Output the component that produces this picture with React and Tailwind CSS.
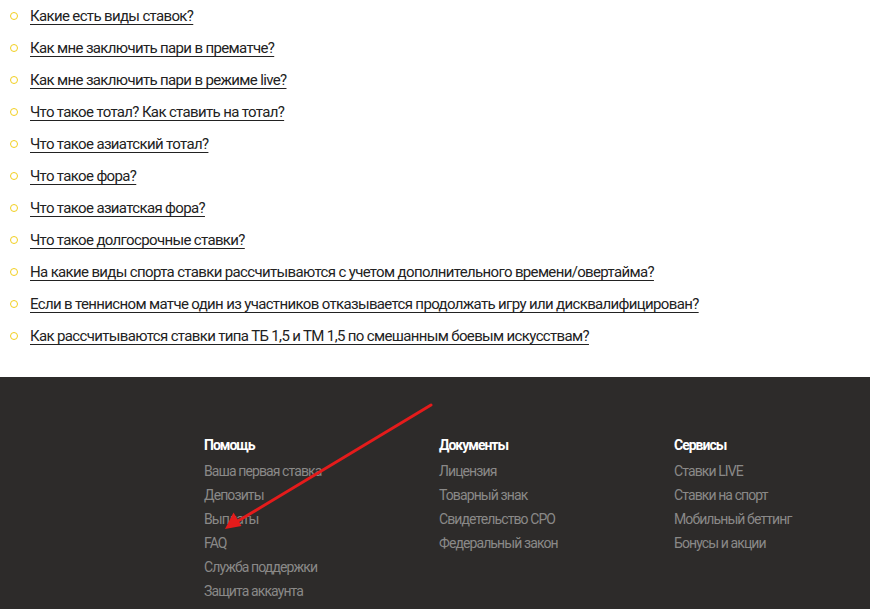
import React from 'react';

const questions = [
  'Какие есть виды ставок?',
  'Как мне заключить пари в прематче?',
  'Как мне заключить пари в режиме live?',
  'Что такое тотал? Как ставить на тотал?',
  'Что такое азиатский тотал?',
  'Что такое фора?',
  'Что такое азиатская фора?',
  'Что такое долгосрочные ставки?',
  'На какие виды спорта ставки рассчитываются с учетом дополнительного времени/овертайма?',
  'Если в теннисном матче один из участников отказывается продолжать игру или дисквалифицирован?',
  'Как рассчитываются ставки типа ТБ 1,5 и ТМ 1,5 по смешанным боевым искусствам?',
];

const columns = [
  {
    title: 'Помощь',
    links: ['Ваша первая ставка', 'Депозиты', 'Выплаты', 'FAQ', 'Служба поддержки', 'Защита аккаунта'],
  },
  {
    title: 'Документы',
    links: ['Лицензия', 'Товарный знак', 'Свидетельство СРО', 'Федеральный закон'],
  },
  {
    title: 'Сервисы',
    links: ['Ставки LIVE', 'Ставки на спорт', 'Мобильный беттинг', 'Бонусы и акции'],
  },
];

export default function App() {
  return (
    <div className="relative min-h-[609px] bg-white font-['Roboto',sans-serif]">
      {/* FAQ list */}
      <ul className="flex flex-col">
        {questions.map((q) => (
          <li key={q} className="flex h-8 items-center">
            <span className="ml-[10px] mr-[12px] h-[8px] w-[8px] shrink-0 rounded-full border-[1.5px] border-[#f2cf1f]" />
            <a
              href="#"
              className="text-[15px] tracking-[-0.65px] text-[#222] underline underline-offset-[3px] decoration-[1px]"
            >
              {q}
            </a>
          </li>
        ))}
      </ul>

      {/* Footer */}
      <footer className="mt-[25px] bg-[#2d2b2a] pb-8 pt-[58px]">
        <div className="ml-[204px] grid grid-cols-[235px_235px_1fr]">
          {columns.map((col) => (
            <div key={col.title} className="flex flex-col">
              <h4 className="mb-[4px] text-[14px] font-bold leading-5 tracking-[-1px] text-white">{col.title}</h4>
              {col.links.map((l) => (
                <a key={l} href="#" className="text-[14px] leading-6 tracking-[-0.9px] text-[#8a8988]">
                  {l}
                </a>
              ))}
            </div>
          ))}
        </div>
      </footer>

      {/* red annotation arrow */}
      <svg className="pointer-events-none absolute left-0 top-0" width="870" height="609">
        <line x1="431" y1="405" x2="238" y2="521" stroke="#e41b1b" strokeWidth="3" strokeLinecap="round" />
        <polygon points="225,529 241.5,526 233.5,512.5" fill="#e41b1b" />
      </svg>
    </div>
  );
}
